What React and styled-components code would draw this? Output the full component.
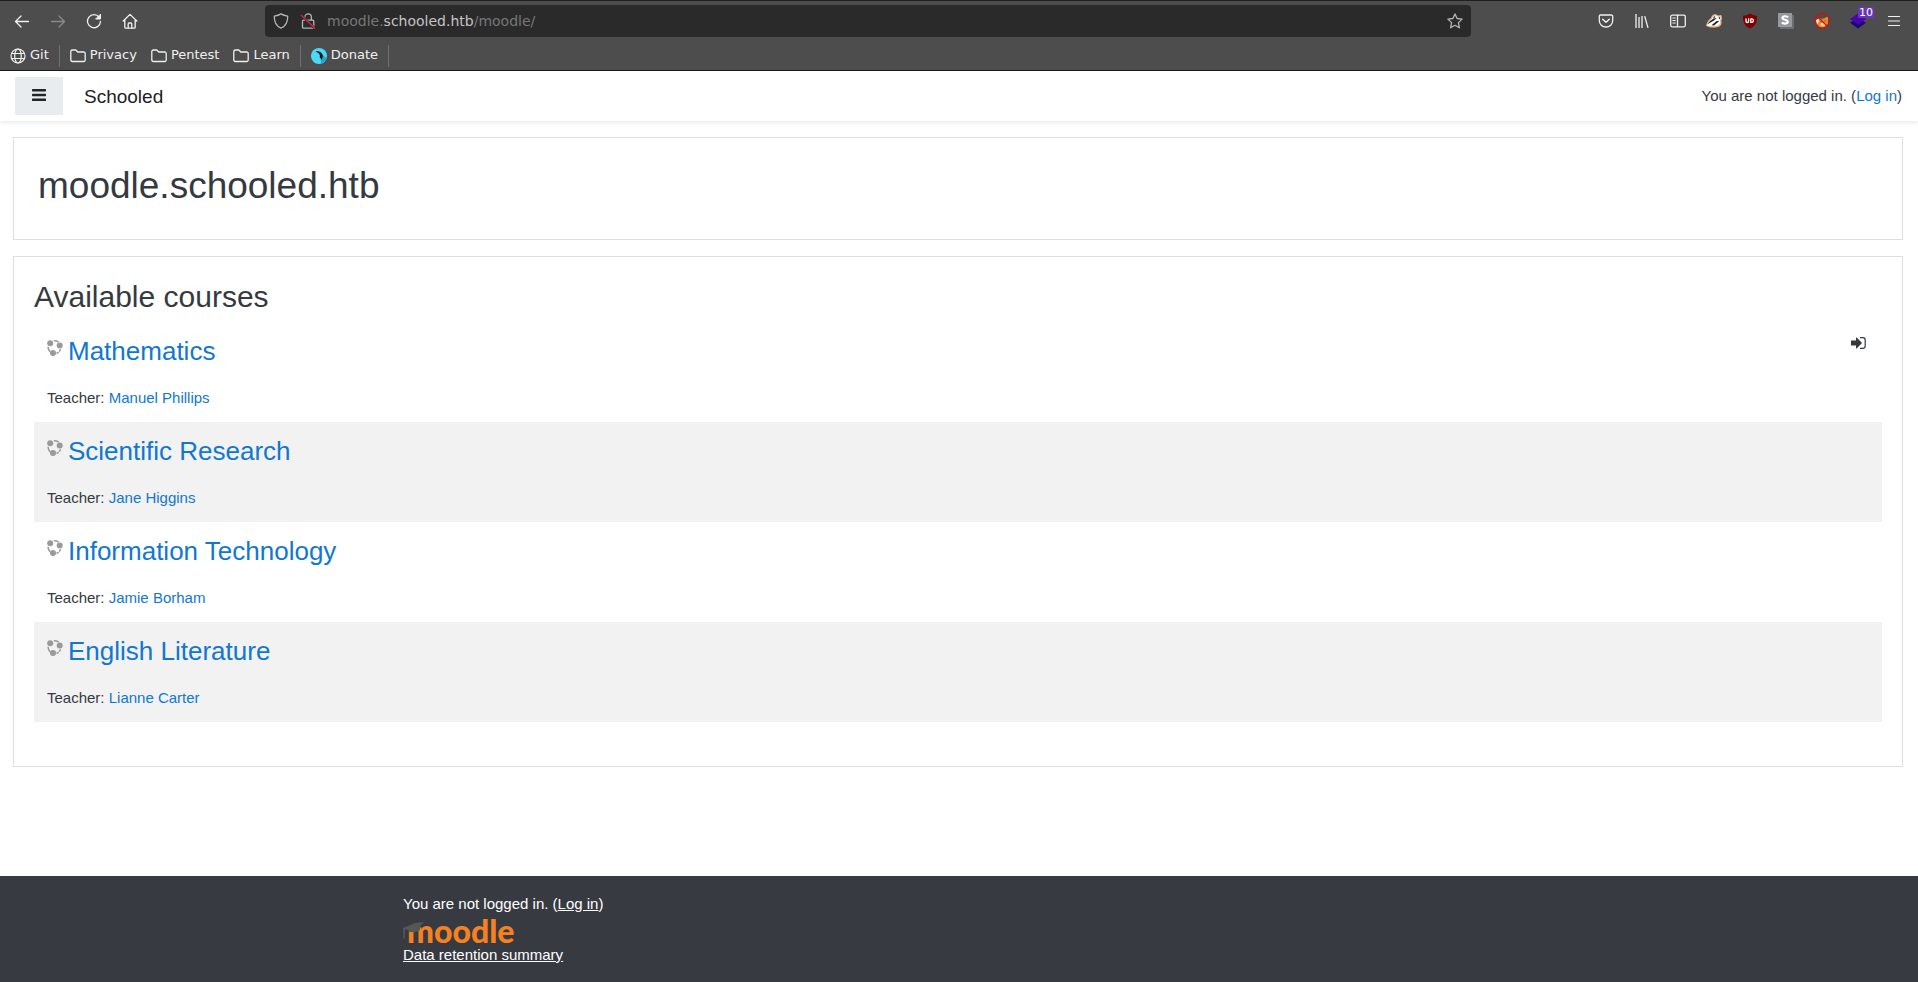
import React from 'react';
import styled, { createGlobalStyle } from 'styled-components';

const Global = createGlobalStyle`
  *, *::before, *::after { box-sizing: border-box; }
  body {
    margin: 0;
    background: #fff;
    color: #343a40;
    font: 15px/22px "Liberation Sans", Arial, sans-serif;
  }
  svg { display: block; flex: none; }
`;

const Page = styled.div`
  display: flex;
  flex-direction: column;
  min-height: 100vh;
`;

/* ---------- Browser chrome ---------- */

const Chrome = styled.header`
  background: #4d4d4d;
  border-top: 1px solid #1f1f20;
  border-bottom: 1px solid #1c1b1f;
  color: #f0f0f0;
  font: 13px/20px "DejaVu Sans", sans-serif;
`;

const ToolRow = styled.div`
  display: flex;
  align-items: center;
  height: 40px;
  padding: 0 6px 0 4px;
`;

const ToolButton = styled.button`
  position: relative;
  display: flex;
  align-items: center;
  justify-content: center;
  width: 36px;
  height: 32px;
  padding: 0;
  border: 0;
  background: none;
  color: ${(p) => (p.disabled ? '#8a8a8a' : '#f0f0f0')};
`;

const CountBadge = styled.span`
  position: absolute;
  top: 2px;
  right: 2px;
  padding: 0 1px;
  border-radius: 1px;
  background: #6b35b8;
  color: #fff;
  font: 11px/11px "DejaVu Sans", sans-serif;
`;

const AddressBar = styled.div`
  display: flex;
  flex: 1;
  align-items: center;
  gap: 11px;
  height: 32px;
  margin: 0 117px;
  padding: 0 8px;
  border-radius: 4px;
  background: #2a2a2a;
  color: #b4b4b4;
`;

const Address = styled.a`
  flex: 1;
  color: #777;
  font-size: 14px;
  text-decoration: none;

  b { color: #c4c4c4; font-weight: 400; }
`;

const StarButton = styled.button`
  padding: 0;
  border: 0;
  background: none;
  color: #b4b4b4;
`;

const BookmarkRow = styled.nav`
  display: flex;
  align-items: center;
  height: 29px;
  padding: 0 4px;
`;

const Bookmark = styled.a`
  display: flex;
  align-items: center;
  gap: 4px;
  padding: 0 8px 1px 6px;
  color: inherit;
  text-decoration: none;

  svg { margin-top: 2px; }
`;

const Separator = styled.span`
  width: 1px;
  height: 22px;
  margin: 0 4px 0 2px;
  background: #707070;
`;

/* ---------- Site ---------- */

const Link = styled.a`
  color: ${(p) => (p.$light ? '#fff' : '#1177d1')};
  text-decoration: ${(p) => (p.$light ? 'underline' : 'none')};
`;

const SiteBar = styled.nav`
  display: flex;
  align-items: center;
  height: 50px;
  padding: 0 16px 0 15px;
  box-shadow: 0 2px 4px rgba(0, 0, 0, 0.08);
`;

const MenuButton = styled.button`
  display: flex;
  align-items: center;
  justify-content: center;
  width: 48px;
  height: 38px;
  padding: 0 0 2px;
  border: 0;
  background: #e9ecef;
  color: #212529;
`;

const Brand = styled.a`
  margin: 0 auto 0 21px;
  padding-top: 2px;
  color: #1d2125;
  font-size: 19px;
  text-decoration: none;
`;

const Main = styled.main`
  display: flex;
  flex-direction: column;
  gap: 16px;
  padding: 16px 15px 109px 13px;
`;

const TitleCard = styled.section`
  padding: 25px 24px 31px;
  border: 1px solid #dedede;
`;

const Title = styled.h1`
  margin: 0;
  font-size: 37px;
  font-weight: 400;
  line-height: 45px;
`;

const CoursesCard = styled.section`
  padding: 22px 20px 44px;
  border: 1px solid #dedede;
`;

const SectionTitle = styled.h2`
  margin: 0 0 7px;
  font-size: 30px;
  font-weight: 400;
  line-height: 36px;
`;

const Course = styled.article`
  padding: 13px;

  &:nth-of-type(even) { background: #f2f2f2; }
`;

const CourseHead = styled.div`
  display: flex;
  align-items: flex-start;
  gap: 5px;
  margin-bottom: 19px;

  > svg { margin-top: 5px; }
`;

const CourseName = styled.h3`
  flex: 1;
  margin: 0;
  font-size: 26px;
  font-weight: 400;
  line-height: 33px;
`;

const EnrolLink = styled.a`
  padding: 2px 3px;
  color: #343a40;
`;

const Teacher = styled.p`
  margin: 0;
`;

const Footer = styled.footer`
  flex: 1;
  padding: 17px 2px 16px 0;
  background: #373a41;
  color: #fff;
`;

const FooterInner = styled.div`
  max-width: 1140px;
  margin: 0 auto;
  padding: 0 15px;
`;

const LogoLink = styled.a`
  display: block;
  width: 114px;

  svg { overflow: visible; }
`;

/* ---------- Icons ---------- */

const Icon = ({ size = 16, children, ...rest }) => (
  <svg
    width={size}
    height={size}
    viewBox="0 0 16 16"
    fill="none"
    stroke="currentColor"
    strokeWidth="1.3"
    strokeLinecap="round"
    strokeLinejoin="round"
    aria-hidden="true"
    {...rest}
  >
    {children}
  </svg>
);

const BackIcon = () => <Icon><path d="M14.5 8.5h-13M7 3 1.5 8.5 7 14" /></Icon>;
const ForwardIcon = () => <Icon><path d="M1.5 8.5h13M9 3l5.500 5.500L9 14" /></Icon>;
const ReloadIcon = () => (
  <Icon>
    <path d="M13.200 4.300A6.500 6.500 0 1 0 14.500 8.500" />
    <path d="M14.500 1.500v4.500H10z" fill="currentColor" strokeWidth="1" />
  </Icon>
);
const HomeIcon = () => (
  <Icon>
    <path d="M1.200 8 8 1.400 14.800 8M2.800 7v7.200a1 1 0 0 0 1 1h8.400a1 1 0 0 0 1-1V7" />
    <path d="M6.200 15v-4a1 1 0 0 1 1-1h1.600a1 1 0 0 1 1 1v4" />
  </Icon>
);
const ShieldIcon = () => (
  <Icon><path d="M8 .9c2 1.300 4.200 1.900 6.700 2.200.2 6-1.700 10.100-6.700 12.100C3 13.200 1.100 9.100 1.300 3.100 3.800 2.800 6 2.200 8 .9z" /></Icon>
);
const LockIcon = () => (
  <Icon>
    <path d="M4.800 7V4.200a3.300 3.300 0 0 1 6.600 0V7M3.500 7.200h9.300a1 1 0 0 1 1 1v6a1 1 0 0 1-1 1H3.500a1 1 0 0 1-1-1v-6a1 1 0 0 1 1-1z" />
    <path d="M1.200 2.200 14.800 15.300" stroke="#2a2a2a" strokeWidth="2.400" />
    <path d="M1.200 2.200 14.800 15.300" stroke="#e3204a" />
  </Icon>
);
const StarIcon = () => (
  <Icon><path d="m8 .9 2.100 4.600 5 .6-3.700 3.500 1 5.200L8 12.300l-4.400 2.500 1-5.200L.9 6.100l5-.6z" /></Icon>
);
const PocketIcon = () => (
  <Icon>
    <path d="M2.500 2h11a1.200 1.200 0 0 1 1.200 1.200v4.600a6.700 6.200 0 0 1-13.400 0V3.200A1.200 1.200 0 0 1 2.500 2z" />
    <path d="M4.700 6.200 8 9.300l3.300-3.100" strokeWidth="1.500" />
  </Icon>
);
const LibraryIcon = () => (
  <Icon strokeLinecap="butt"><path d="M2 1v14M5 4v11M8 3v12M10.700 3.100l3.300 11.800" /></Icon>
);
const SidebarIcon = () => (
  <Icon>
    <rect x=".7" y="2.200" width="14.600" height="11.600" rx="1.500" />
    <path d="M7.500 2.500v11" />
    <path d="M2.800 5h2.500M2.800 7.500h2.500M2.800 10h2.500" strokeWidth="1" />
  </Icon>
);
const BadgerIcon = () => (
  <Icon stroke="none">
    <path d="M0 12.800C.6 9.500 2.500 7 5 5c.6-2.300 2-3.700 4-3.700 1.400 0 2.400.6 3 1.200l3.300-.5.700 3.500-.7 2c1 3.500-.6 6-3.300 6.500-3.500.9-8.500 1-12-1.200z" fill="#efb68b" />
    <path d="M1 12.300C2 9.500 3.700 7.500 6 5.700c.5-2 1.600-3.300 3.200-3.300 1.500 0 2.500.8 3 1.500l2.300-.6.200 2.200-.9 2c.9 2.800-.5 4.800-2.600 5.200-3.200.7-7 .8-10.200-.4z" fill="#fff" />
    <path d="M1.200 11.500C2.800 9.300 4.800 7.300 7.300 5.800L11 4.700 8 7.600 3.500 10zM5.500 12.300 10.700 8l2.500.2-2.900 2.300-2.300 1.900zM12.600 4.500l1.500-.4.100 1.200-.9.900zM6.800 5.200l1.500-1.900 1 .2-1 1.600z" fill="#1d1d1d" />
  </Icon>
);
const BlockerIcon = () => (
  <Icon stroke="none">
    <path d="M8 .5c2 1.300 4.300 2 7 2.200.2 6.200-1.300 10.300-7 12.900C2.300 13 .8 8.900 1 2.700 3.700 2.500 6 1.800 8 .5z" fill="#800000" />
    <path d="M4 5.800v2.400a1.300 1.300 0 0 0 2.600 0V5.800M8.800 5.900v3.500h.9a1.750 1.750 0 0 0 0-3.500z" stroke="#fff" strokeWidth="1.300" />
  </Icon>
);
const StylusIcon = () => (
  <Icon stroke="none">
    <path d="M2 2h14v14H2z" fill="#6a6f74" />
    <path d="M0 0h14v14H0z" fill="#959a9e" />
    <path d="M10 4.300C9.200 3 4.500 2.600 4.500 5c0 2.200 5.200 1.300 5.200 3.800 0 2.300-4.700 2.200-5.700.6" stroke="#fff" strokeWidth="2.200" strokeLinecap="butt" />
  </Icon>
);
const FoxIcon = () => (
  <Icon stroke="none">
    <path d="M3 11c-1.500-3 0-5.500 3-6l2 1 4-1.500 1.500-1 .8 3.500-.5 4c-1 2.500-3 3.500-5.500 3.500C6 14.500 4 13.500 3 11z" fill="#e88a2a" />
    <path d="m2 7 2.500-1L5 9l-2 2zM7 9.500l2 1 2.500-.5-.8 2.500-1.700 1-2.500-1.500zM12.500 4.500l.8-.4.200 2z" fill="#f7e3c4" />
    <path d="m10.500 7.500 1.500.4-1 .7zM6.500 8.500l1.500.5-1 .6zM8.500 11.700l1.200.1-.6.700z" fill="#26211d" />
    <circle cx="8" cy="8" r="7.300" stroke="#cc1111" strokeWidth="1.200" />
    <path d="m3 3 10 10" stroke="#cc1111" strokeWidth="1.200" />
  </Icon>
);
const LayersIcon = () => (
  <Icon stroke="none">
    <path d="m0 9.800 8-4.600 8 4.600-8 5.700z" fill="#1c0873" />
    <path d="m0 6 8-5.500L16 6l-8 5.600z" fill="#4b05b0" />
  </Icon>
);
const AppMenuIcon = () => <Icon strokeWidth="1.200"><path d="M2.500 3.500h11M2.500 8h11M2.500 12.500h11" /></Icon>;
const GlobeIcon = () => (
  <Icon strokeWidth="1.200">
    <circle cx="8" cy="8" r="7" />
    <ellipse cx="8" cy="8" rx="3.300" ry="7" />
    <path d="M1.500 5.500h13M1.500 10.500h13" />
  </Icon>
);
const FolderIcon = () => (
  <Icon><path d="M2.200 2h3.600l2 2h6a1.400 1.400 0 0 1 1.400 1.400v6.700a1.400 1.400 0 0 1-1.400 1.400H2.200A1.400 1.400 0 0 1 .8 12.100V3.400A1.400 1.400 0 0 1 2.200 2z" /></Icon>
);
const DonateIcon = () => (
  <Icon stroke="none">
    <circle cx="8" cy="8" r="8" fill="#4ed8f8" />
    <path d="m9.500 4.500 6 5.500c-.8 3-2.800 5-5.500 5.800z" fill="#25a9cc" />
    <path d="M4.500 3.300c4.500-.4 7 1.700 7.200 4.800l-.7 4-2.300-2.800c.6-2.500-.2-3.500-2-4.600z" fill="#0b1216" />
  </Icon>
);

const BarsIcon = () => (
  <svg width="14" height="12" viewBox="0 0 14 12" fill="currentColor" aria-hidden="true">
    <rect width="14" height="2.400" rx=".6" />
    <rect y="4.800" width="14" height="2.400" rx=".6" />
    <rect y="9.600" width="14" height="2.400" rx=".6" />
  </svg>
);
const CourseIcon = () => (
  <Icon stroke="#999" strokeWidth="1.500" strokeLinecap="butt">
    <g fill="#999" stroke="none">
      <circle cx="3.200" cy="3.200" r="3" />
      <circle cx="12.700" cy="5.600" r="3" />
      <circle cx="6" cy="13" r="3" />
    </g>
    <path d="M6.800.9q2.600-.2 4.800 1.100M1 6.800q.1 3 2.200 5.200M13.600 9.200q-.5 1.300-1.300 2.200M11.700 12q-1 .9-2.300 1.400" />
  </Icon>
);
const EnrolIcon = () => (
  <svg width="15" height="12" viewBox="0 0 15 12" aria-hidden="true">
    <path d="M0 3.500h5V.8q0-.7.600-.2l5 4.900q.5.500 0 1l-5 4.900q-.6.500-.6-.2V8.500H0z" fill="currentColor" />
    <path d="M9 .7h3a2.200 2.200 0 0 1 2.200 2.200v6.200A2.200 2.200 0 0 1 12 11.300H9" fill="none" stroke="currentColor" strokeWidth="1.200" />
  </svg>
);

const MoodleLogo = () => (
  <svg width="114" height="29" viewBox="0 0 114 29" role="img" aria-label="moodle">
    <text x="4" y="28" fill="#f68121" fontFamily="Lato, sans-serif" fontSize="32" fontWeight="900">moodle</text>
    <path d="M0 13 12 8l9-1-3.500 3.500-.8 5-5 1.800-5.500-.4-.2-2L2 14.500l-.2 8.500L.5 24z" fill="#565656" />
  </svg>
);

/* ---------- Data ---------- */

const extensions = [
  ['Pocket', PocketIcon],
  ['Library', LibraryIcon],
  ['Sidebars', SidebarIcon],
  ['Privacy Badger', BadgerIcon],
  ['Content blocker', BlockerIcon],
  ['Styles', StylusIcon],
  ['Proxy', FoxIcon],
  ['Technologies', LayersIcon, 10],
  ['Application menu', AppMenuIcon],
];

const courses = [
  { name: 'Mathematics', teacher: 'Manuel Phillips', enrol: true },
  { name: 'Scientific Research', teacher: 'Jane Higgins' },
  { name: 'Information Technology', teacher: 'Jamie Borham' },
  { name: 'English Literature', teacher: 'Lianne Carter' },
];

export default function App() {
  return (
    <Page>
      <Global />
      <Chrome>
        <ToolRow>
          <ToolButton aria-label="Back"><BackIcon /></ToolButton>
          <ToolButton aria-label="Forward" disabled><ForwardIcon /></ToolButton>
          <ToolButton aria-label="Reload"><ReloadIcon /></ToolButton>
          <ToolButton aria-label="Home"><HomeIcon /></ToolButton>
          <AddressBar>
            <ShieldIcon />
            <LockIcon />
            <Address href="#">moodle.<b>schooled.htb</b>/moodle/</Address>
            <StarButton aria-label="Bookmark this page"><StarIcon /></StarButton>
          </AddressBar>
          {extensions.map(([label, Glyph, count]) => (
            <ToolButton key={label} aria-label={label}>
              <Glyph />
              {count && <CountBadge>{count}</CountBadge>}
            </ToolButton>
          ))}
        </ToolRow>
        <BookmarkRow>
          <Bookmark href="#"><GlobeIcon />Git</Bookmark>
          <Separator />
          <Bookmark href="#"><FolderIcon />Privacy</Bookmark>
          <Bookmark href="#"><FolderIcon />Pentest</Bookmark>
          <Bookmark href="#"><FolderIcon />Learn</Bookmark>
          <Separator />
          <Bookmark href="#"><DonateIcon />Donate</Bookmark>
          <Separator />
        </BookmarkRow>
      </Chrome>

      <SiteBar>
        <MenuButton aria-label="Side panel"><BarsIcon /></MenuButton>
        <Brand href="#">Schooled</Brand>
        <span>You are not logged in. (<Link href="#">Log in</Link>)</span>
      </SiteBar>

      <Main>
        <TitleCard>
          <Title>moodle.schooled.htb</Title>
        </TitleCard>
        <CoursesCard>
          <SectionTitle>Available courses</SectionTitle>
          {courses.map((course) => (
            <Course key={course.name}>
              <CourseHead>
                <CourseIcon />
                <CourseName><Link href="#">{course.name}</Link></CourseName>
                {course.enrol && <EnrolLink href="#" aria-label="Self enrolment"><EnrolIcon /></EnrolLink>}
              </CourseHead>
              <Teacher>Teacher: <Link href="#">{course.teacher}</Link></Teacher>
            </Course>
          ))}
        </CoursesCard>
      </Main>

      <Footer>
        <FooterInner>
          <div>You are not logged in. (<Link $light href="#">Log in</Link>)</div>
          <LogoLink href="#"><MoodleLogo /></LogoLink>
          <Link $light href="#">Data retention summary</Link>
        </FooterInner>
      </Footer>
    </Page>
  );
}
